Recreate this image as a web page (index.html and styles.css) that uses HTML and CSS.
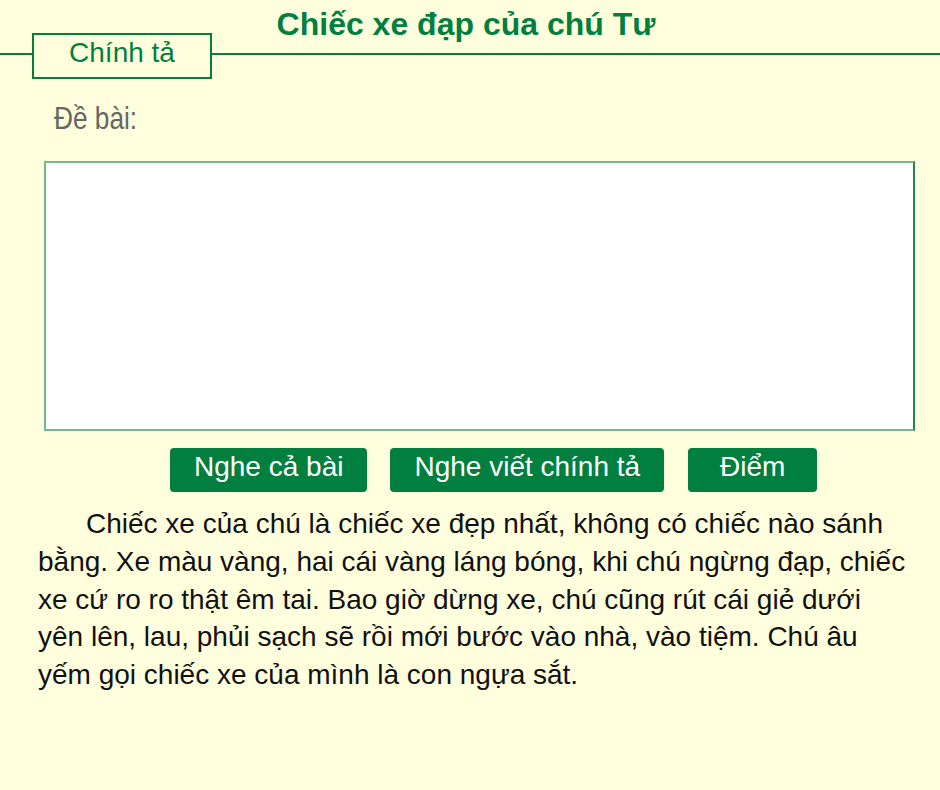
FILE: index.html
```html
<!DOCTYPE html>
<html lang="vi">
<head>
    <meta charset="UTF-8">
    <meta name="viewport" content="width=device-width, initial-scale=1.0">
    <title>Chính tả - Chiếc xe đạp của chú Tư</title>
    <link rel="stylesheet" href="styles.css">
</head>
<body>
    <div class="header">
        <h1 class="title">Chiếc xe đạp của chú Tư</h1>
        <div class="tab-row">
            <div class="rule rule-left"></div>
            <div class="tab">Chính tả</div>
            <div class="rule rule-right"></div>
        </div>
    </div>

    <div class="prompt"><span class="prompt-label">Đề bài:</span></div>
    <textarea class="answer" id="answer"></textarea>

    <div class="actions">
        <button id="listenAll">Nghe cả bài</button>
        <button id="dictation">Nghe viết chính tả</button>
        <button id="score" class="btn-score">Điểm</button>
    </div>

    <p class="passage">Chiếc xe của chú là chiếc xe đẹp nhất, không có chiếc nào sánh bằng. Xe màu vàng, hai cái vàng láng bóng, khi chú ngừng đạp, chiếc xe cứ ro ro thật êm tai. Bao giờ dừng xe, chú cũng rút cái giẻ dưới yên lên, lau, phủi sạch sẽ rồi mới bước vào nhà, vào tiệm. Chú âu yếm gọi chiếc xe của mình là con ngựa sắt.</p>
</body>
</html>
```

FILE: styles.css
```css
body {
    margin: 0;
    background-color: #ffffdd;
    font-family: "Liberation Sans", Arial, sans-serif;
    color: #111;
}

.header {
    display: grid;
    height: 80px;
}

.title,
.tab-row {
    grid-area: 1 / 1;
}

.title {
    margin: 0;
    padding: 6px 8px 0 0;
    text-align: center;
    font-size: 32px;
    line-height: 37px;
    font-weight: bold;
    color: #007f3f;
}

.tab-row {
    display: flex;
    align-items: flex-start;
}

.rule {
    height: 55px;
    box-sizing: border-box;
    border-bottom: 2px solid #007f3f;
}

.rule-left {
    width: 32px;
}

.rule-right {
    flex: 1;
}

.tab {
    margin-top: 33px;
    width: 180px;
    height: 46px;
    box-sizing: border-box;
    border: 2px solid #007f3f;
    text-align: center;
    font-size: 28px;
    line-height: 36px;
    color: #007f3f;
}

.prompt {
    margin-top: 20px;
    padding-left: 54px;
    font-size: 32px;
    line-height: 37px;
    color: #666;
}

/* the label is drawn in a narrow face */
.prompt-label {
    display: inline-block;
    transform: scaleX(0.82);
    transform-origin: left center;
}

.answer {
    display: block;
    margin: 24px 0 0 44px;
    width: 871px;
    height: 270px;
    box-sizing: border-box;
    border: 2px solid #6fb98d;
    border-right-color: #1a8a4a;
    background-color: #fff;
    resize: none;
    outline: none;
}

.actions {
    display: flex;
    gap: 23px;
    margin-top: 17px;
    padding-left: 170px;
}

.actions button {
    height: 44px;
    padding: 0 24px 6px;
    border: none;
    border-radius: 4px;
    background-color: #007f3f;
    color: #fff;
    font-family: "Liberation Sans", Arial, sans-serif;
    font-size: 28px;
    line-height: 38px;
    cursor: pointer;
}

.actions button.btn-score {
    width: 129px;
    margin-left: 1px;
}

.passage {
    margin: 13px 30px 0 38px;
    text-indent: 48px;
    font-size: 28px;
    line-height: 37.75px;
}
```
